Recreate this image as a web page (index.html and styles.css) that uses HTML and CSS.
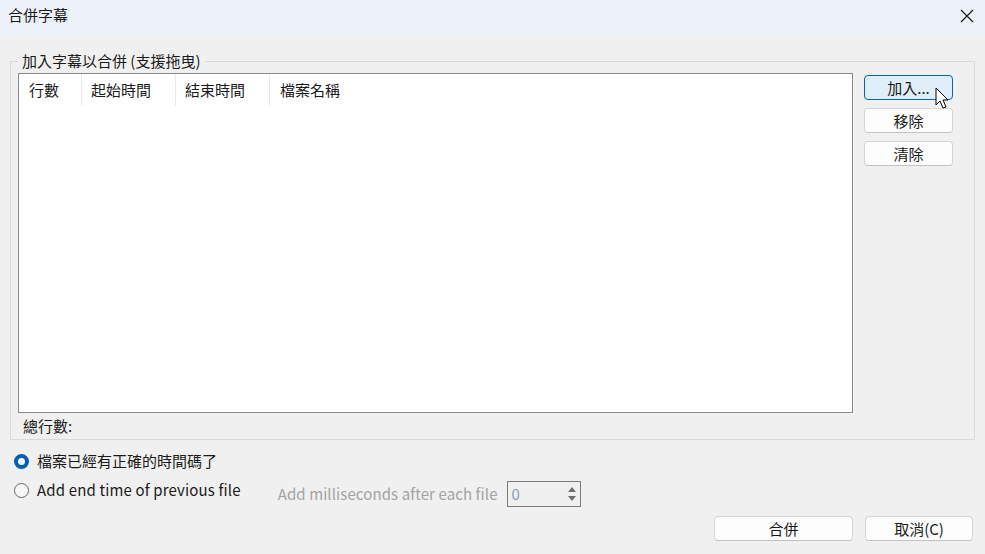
FILE: index.html
```html
<!DOCTYPE html>
<html lang="zh-Hant">
<head>
  <meta charset="UTF-8">
  <meta name="viewport" content="width=device-width, initial-scale=1.0">
  <title>合併字幕</title>
  <link rel="stylesheet" href="styles.css">
</head>
<body>
  <div class="window">
    <div class="titlebar">
      <span class="title">合併字幕</span>
      <svg class="close" width="14" height="14" viewBox="0 0 14 14">
        <path d="M1 1 L13 13 M13 1 L1 13" stroke="#1a1a1a" stroke-width="1.2" fill="none"/>
      </svg>
    </div>

    <div class="dialog-body">
      <fieldset class="group">
        <legend>加入字幕以合併 (支援拖曳)</legend>
        <div class="group-main">
          <div class="listview">
            <div class="list-header">
              <div class="col col-line">行數</div>
              <div class="col col-start">起始時間</div>
              <div class="col col-end">結束時間</div>
              <div class="col col-file">檔案名稱</div>
            </div>
          </div>
          <div class="side-buttons">
            <button class="btn btn-hover" type="button">加入...</button>
            <button class="btn" type="button">移除</button>
            <button class="btn" type="button">清除</button>
          </div>
        </div>
        <div class="total-row">總行數:</div>
      </fieldset>

      <div class="radio-row">
        <span class="radio checked"></span>
        <span class="radio-label">檔案已經有正確的時間碼了</span>
      </div>
      <div class="radio-row second">
        <span class="radio"></span>
        <span class="radio-label latin">Add end time of previous file</span>
        <div class="ms-group">
          <span class="ms-label">Add milliseconds after each file</span>
          <div class="spinner">
            <span class="spin-value">0</span>
            <svg class="spin-arrows" width="10" height="18" viewBox="0 0 10 18">
              <path d="M1 7 L5 2 L9 7 Z" fill="#6e6e6e"/>
              <path d="M1 11 L5 16 L9 11 Z" fill="#6e6e6e"/>
            </svg>
          </div>
        </div>
      </div>

      <div class="footer">
        <button class="btn btn-ok" type="button">合併</button>
        <button class="btn btn-cancel" type="button">取消(C)</button>
      </div>
    </div>

    <!-- mouse pointer over the add button -->
    <svg class="cursor" width="16" height="24" viewBox="0 0 16 24">
      <path d="M1 1 L1 18 L5 14 L8 21 L11 20 L8 13 L13 13 Z" fill="#ffffff" stroke="#000000" stroke-width="1" stroke-linejoin="round"/>
    </svg>
  </div>
</body>
</html>
```

FILE: styles.css
```css
body {
  margin: 0;
  font-family: "Noto Sans CJK TC", "Noto Sans", sans-serif;
  font-size: 15px;
  color: #1a1a1a;
  background-color: #f0f0f0;
}
.window {
  position: relative;
  width: 985px;
  height: 554px;
  overflow: hidden;
  background-color: #f0f0f0;
}
.titlebar {
  height: 34px;
  display: flex;
  align-items: center;
  justify-content: space-between;
  padding: 0 11px 0 8px;
  background-color: #edf2f9;
}
.title {
  font-size: 15px;
  line-height: 20px;
  margin-top: -4px;
}
.close {
  margin-top: -3px;
}
.dialog-body {
  padding: 17px 10px 0 10px;
}
.group {
  margin: 0;
  border: 1px solid #dadada;
  padding: 2px 21px 0 7px;
}
.group legend {
  padding: 0 4px;
  line-height: 20px;
  margin-top: -1px;
}
.group-main {
  display: flex;
  gap: 11px;
}
.listview {
  width: 833px;
  height: 338px;
  background-color: #ffffff;
  border: 1px solid #868a91;
}
.list-header {
  display: flex;
  height: 32px;
}
.col {
  line-height: 32px;
  padding-left: 9px;
  border-right: 1px solid #e8e8e8;
  box-sizing: border-box;
}
.col-line {
  width: 63px;
  padding-left: 10px;
}
.col-start,
.col-end {
  width: 94px;
}
.col-file {
  border-right: none;
  padding-left: 10px;
}
.side-buttons {
  display: flex;
  flex-direction: column;
  gap: 8px;
  padding-top: 2px;
}
.btn {
  font-family: inherit;
  font-size: 15px;
  color: #1a1a1a;
  height: 25px;
  width: 89px;
  padding: 0;
  line-height: 22px;
  background-color: #fdfdfd;
  border: 1px solid #d4d4d4;
  border-bottom-color: #c2c2c2;
  border-radius: 4px;
}
.btn-hover {
  background-color: #e0eef9;
  border-color: #0067c0;
}
.total-row {
  height: 26px;
  line-height: 26px;
  padding-left: 5px;
}
.radio-row {
  display: flex;
  align-items: center;
  height: 20px;
  margin-top: 11px;
  padding-left: 4px;
}
.radio-row.second {
  margin-top: 9px;
  align-items: flex-start;
}
.radio {
  width: 15px;
  height: 15px;
  box-sizing: border-box;
  border-radius: 50%;
  border: 1px solid #666666;
  background-color: #f7f7f7;
  margin-right: 8px;
  flex: none;
}
.radio.checked {
  border: 4px solid #005fb8;
  background-color: #ffffff;
}
.radio-row.second .radio {
  margin-top: 3px;
}
.radio-label {
  line-height: 20px;
}
.latin {
  letter-spacing: 0.15px;
}
.ms-group {
  display: flex;
  align-items: center;
  margin-left: 37px;
  margin-top: 1px;
}
.ms-label {
  color: #a3a3a3;
  line-height: 26px;
  margin-right: 9px;
  letter-spacing: 0.1px;
}
.spinner {
  width: 65px;
  height: 24px;
  border: 1px solid #7a7a7a;
  background-color: #f0f0f0;
  display: flex;
  align-items: center;
  justify-content: space-between;
  padding: 0 3px 0 4px;
  box-sizing: content-box;
}
.spin-value {
  color: #8a9bb5;
  line-height: 24px;
}
.footer {
  display: flex;
  justify-content: flex-end;
  gap: 12px;
  margin-top: 16px;
  padding-right: 2px;
}
.btn-ok {
  width: 139px;
}
.btn-cancel {
  width: 108px;
}
.cursor {
  position: absolute;
  left: 935px;
  top: 87px;
}
```
